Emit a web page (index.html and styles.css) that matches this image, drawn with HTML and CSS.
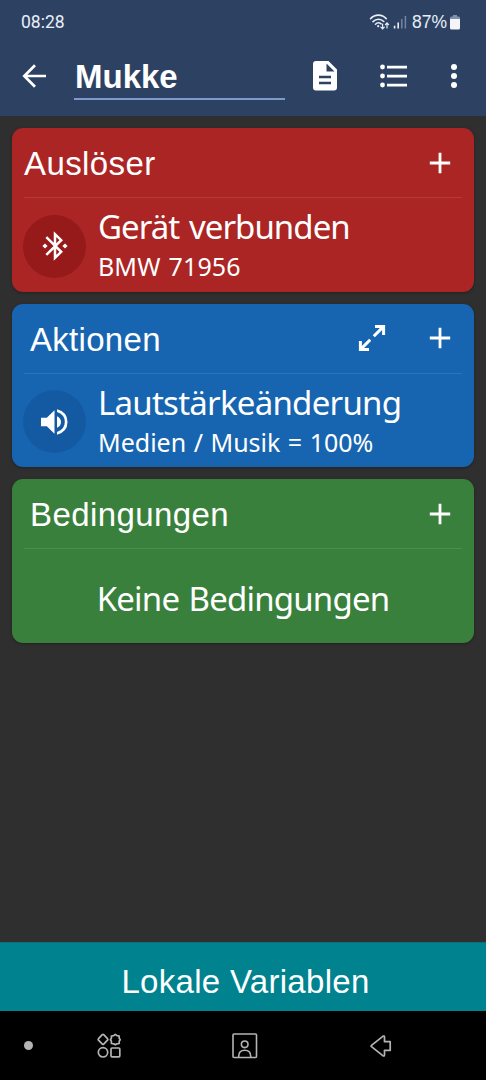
FILE: index.html
```html
<!DOCTYPE html>
<html lang="de">
<head>
<meta charset="utf-8">
<title>Mukke</title>
<link rel="stylesheet" href="styles.css">
</head>
<body>
<div class="screen">
  <header class="header">
    <div class="status">
      <span class="clock">08:28</span>
      <svg class="signal" width="38" height="18" viewBox="0 0 38 18" fill="none" stroke="#e9eef8" stroke-width="1.6" stroke-linecap="round">
        <path d="M1.6 5.6C6 .9 13 .9 17.2 5.6M4 8.6c3.2-3.2 7.800-3.200 10.800-.1M6.500 11.200c1.700-1.700 4-1.600 5.600-.4"/>
        <circle cx="9.200" cy="13.200" r="1.100" fill="#e9eef8" stroke="none"/>
        <path stroke-width="1.200" d="M13.600 11v4.800m-1.700-1.600 1.700 1.800 1.700-1.800M18 15v-4.900m-1.600 1.500L18 9.800l1.600 1.800"/>
        <path stroke-width="1.600" stroke-linecap="butt" d="M25.600 12.800v2.700M29.200 9.500v6"/>
        <path stroke="#7384a4" stroke-width="1.500" stroke-linecap="butt" d="M32.800 6v9.500M36.400 3v12.500"/>
      </svg>
      <span class="percent">87%</span>
      <svg class="battery" width="10" height="15" viewBox="0 0 10 15">
        <path fill="#8290ad" d="M3 0h4v1.500h1.500Q10 1.500 10 3v2H0V3q0-1.500 1.500-1.500H3z"/>
        <path fill="#f3f5fa" d="M0 4h10v9q0 1.500-1.500 1.500h-7Q0 14.500 0 13z"/>
      </svg>
    </div>
    <div class="toolbar">
      <svg class="back" width="24" height="24" viewBox="0 0 24 24" fill="none" stroke="#fff" stroke-width="2.700"><path d="M24 12H2.500M13 1.300 2.300 12 13 22.700"/></svg>
      <div class="name">Mukke</div>
      <svg class="doc" width="24" height="30" viewBox="0 0 24 30" fill="#fff" fill-rule="evenodd"><path d="M3 0h12.500L24 8.500V26.500q0 3-3 3H3q-3 0-3-3V3Q0 0 3 0zM13.500 2.500v8h8zM6 14.800v2.500h12v-2.500zM6 20.700v2.500h12v-2.500z"/></svg>
      <svg class="list" width="28" height="24" viewBox="0 0 28 24" fill="#fff"><circle cx="2.500" cy="3" r="2.400"/><circle cx="2.500" cy="12" r="2.400"/><circle cx="2.500" cy="21" r="2.400"/><path d="M7 1.700h20v2.700H7zM7 10.700h20v2.700H7zM7 19.700h20v2.700H7z"/></svg>
      <svg class="more" width="8" height="24" viewBox="0 0 8 24" fill="#fff"><circle cx="4" cy="3" r="3"/><circle cx="4" cy="12" r="3"/><circle cx="4" cy="21" r="3"/></svg>
    </div>
  </header>

  <main class="cards">
    <section class="card red">
      <div class="card-head flush">
        <h2 class="title t-trigger">Auslöser</h2>
        <svg class="plus" width="22" height="22" viewBox="0 0 22 22" stroke="#fff" stroke-width="2.800"><path d="M11 .8v20.400M.8 11h20.400"/></svg>
      </div>
      <div class="item">
        <span class="badge">
          <svg width="26" height="30" viewBox="0 0 26 30" fill="none" stroke="#fff" stroke-width="2.500"><path d="M4.300 6.200 19.200 20.800 13 26.800V3.200l6.200 6L4.300 23.800"/><path fill="#fff" stroke="none" d="m3 12.400 2.600 2.600L3 17.600.4 15zM23 12.400l2.600 2.600-2.600 2.600-2.600-2.600z"/></svg>
        </span>
        <div class="lines"><div class="main l-device">Gerät verbunden</div><div class="sub s-device">BMW 71956</div></div>
      </div>
    </section>

    <section class="card blue">
      <div class="card-head">
        <h2 class="title t-action">Aktionen</h2>
        <svg class="expand" width="28" height="28" viewBox="0 0 28 28" fill="none" stroke="#fff" stroke-width="3"><path d="M17 2.400h8.600V11M25.400 2.600l-9.600 9.600M2.400 17v8.600H11M2.600 25.400l9.600-9.600"/></svg>
        <svg class="plus" width="22" height="22" viewBox="0 0 22 22" stroke="#fff" stroke-width="2.800"><path d="M11 .8v20.400M.8 11h20.400"/></svg>
      </div>
      <div class="item">
        <span class="badge">
          <svg width="27" height="26" viewBox="0 0 27 26" fill="#fff"><path d="M0 8.700h5.800L13.500 1.200v23.600l-7.700-7.500H0zM16 7.200q4 1.900 4 5.800t-4 5.800zM16 .3q10.500 2.800 10.500 12.700T16 25.700V23q7.800-2.500 7.800-10T16 3z"/></svg>
        </span>
        <div class="lines"><div class="main l-volume">Lautstärkeänderung</div><div class="sub s-volume">Medien / Musik = 100%</div></div>
      </div>
    </section>

    <section class="card green">
      <div class="card-head">
        <h2 class="title t-cond">Bedingungen</h2>
        <svg class="plus" width="22" height="22" viewBox="0 0 22 22" stroke="#fff" stroke-width="2.800"><path d="M11 .8v20.400M.8 11h20.400"/></svg>
      </div>
      <div class="empty"><span class="main l-empty">Keine Bedingungen</span></div>
    </section>
  </main>

  <div class="variables"><span class="title t-vars">Lokale Variablen</span></div>

  <nav class="nav">
    <span class="dot"></span>
    <svg class="apps" width="24" height="26" viewBox="0 0 24 26" fill="none" stroke="#b4b4b4" stroke-width="1.700" stroke-linejoin="round"><path d="M5.300 1.700q.7-.6 1.400 0l3.800 4q.6.700 0 1.400l-3.800 4q-.7.600-1.400 0l-3.800-4q-.6-.7 0-1.400z"/><path d="m18.300 1.400 1.600 1.300 2.300.3v2.300l1 1.500-1 1.500v2.200l-2.300.3-1.600 1-1.600-1-2.300-.3V8.300l-1-1.500 1-1.500V3l2.300-.3z"/><circle cx="6" cy="19.300" r="4.700"/><rect x="14" y="15" width="8.800" height="8.800" rx="1"/></svg>
    <svg class="person" width="26" height="26" viewBox="0 0 26 26" fill="none" stroke="#b4b4b4" stroke-width="1.600"><rect x="1" y="1" width="23.500" height="23.500" rx="1"/><circle cx="12.700" cy="11.300" r="3.300"/><path d="M6.700 24.300v-1q0-6 6-6t6 6v1"/></svg>
    <svg class="return" width="22" height="22" viewBox="0 0 22 22" fill="none" stroke="#b4b4b4" stroke-width="1.700" stroke-linejoin="round"><path d="M1.500 10.300 12.800 1.300q1.700-.9 1.700 1v4.400h5.700v8.600h-5.700v4.400q0 1.900-1.700 1L1.500 11.700q-.8-.7 0-1.400z"/></svg>
  </nav>
</div>
</body>
</html>
```

FILE: styles.css
```css
* { box-sizing: border-box; }
body { margin: 0; background: #2f2f2f; color: #fff; }
svg { display: block; flex: none; }
h2 { margin: 0; font-weight: 400; }

.screen {
  width: 486px;
  height: 1080px;
  display: flex;
  flex-direction: column;
  overflow: hidden;
  font-family: "Noto Sans", sans-serif;
  white-space: nowrap;
}

.header { height: 116px; background: #2d4262; flex: none; }
.status {
  height: 44px;
  padding: 0 26px 0 21px;
  display: flex;
  align-items: center;
  font-family: "Liberation Sans", sans-serif;
  color: #e9eef8;
}
.clock { font-family: Roboto, sans-serif; font-size: 17.500px; margin-right: auto; }
.percent { font-size: 17.500px; margin-left: 5px; padding-top: 1px; }
.battery { margin-left: 3px; margin-top: 1px; }
.signal { margin-top: -1px; }

.toolbar { height: 64px; padding: 0 28px 0 22px; display: flex; align-items: center; }
.name {
  width: 211px;
  height: 47px;
  margin-left: 28px;
  padding-top: 4px;
  padding-left: 1px;
  border-bottom: 2px solid #7e9acb;
  font: bold 33px/40px "Liberation Sans", sans-serif;
}
.doc { margin-left: 28px; }
.list { margin-left: 43px; }
.more { margin-left: auto; }

.cards { flex: 1; padding: 12px 12px 0; display: flex; flex-direction: column; gap: 12px; }
.card { height: 163.500px; padding: 0 12px; border-radius: 11px; box-shadow: 0 1px 3px rgba(0, 0, 0, .3); }
.red { background: #ab2525; }
.blue { background: #1765b0; }
.green { background: #39803d; }

.card-head {
  height: 70px;
  padding: 0 11px 0 6px;
  display: flex;
  align-items: center;
  border-bottom: 1px solid rgba(255, 255, 255, .1);
}
.card-head.flush { padding-left: 0; }
.title { font: 400 33px/40px "Liberation Sans", sans-serif; }
.card .title { margin-right: auto; padding-top: 3px; }
.expand { margin-right: 43px; }
.t-trigger { letter-spacing: .4px; }
.t-action, .t-vars { letter-spacing: .3px; }
.t-cond { letter-spacing: .4px; }

.item { display: flex; padding-top: 17px; }
.badge {
  width: 63px;
  height: 63px;
  margin-left: -1px;
  margin-top: -.5px;
  border-radius: 50%;
  display: flex;
  align-items: center;
  justify-content: center;
  flex: none;
}
.red .badge { background: #961a1a; }
.blue .badge { background: #145aa3; }
.lines { margin: -10px 0 0 12px; }
.main { font-size: 33px; line-height: 44px; }
.sub { font-size: 25px; line-height: 35px; }
.l-device { letter-spacing: -.95px; word-spacing: 2px; }
.l-volume { letter-spacing: -.75px; }
.l-empty { letter-spacing: -.8px; word-spacing: 1.500px; }
.s-device { letter-spacing: .1px; word-spacing: 1.500px; }
.s-volume { letter-spacing: 0; word-spacing: 1px; }
.empty { height: 93px; padding-top: 28px; display: flex; justify-content: center; }

.variables {
  height: 69px;
  flex: none;
  background: #00838f;
  border-top: 1px solid #0c6f78;
  display: flex;
  align-items: center;
  justify-content: center;
  padding: 9px 0 0 5px;
}

.nav { height: 69px; flex: none; background: #000; padding: 0 94px 0 24px; display: flex; align-items: center; }
.dot { width: 9px; height: 9px; border-radius: 50%; background: #b4b4b4; }
.apps { margin-left: 64px; }
.person { margin-left: 111px; }
.return { margin-left: auto; }
```
